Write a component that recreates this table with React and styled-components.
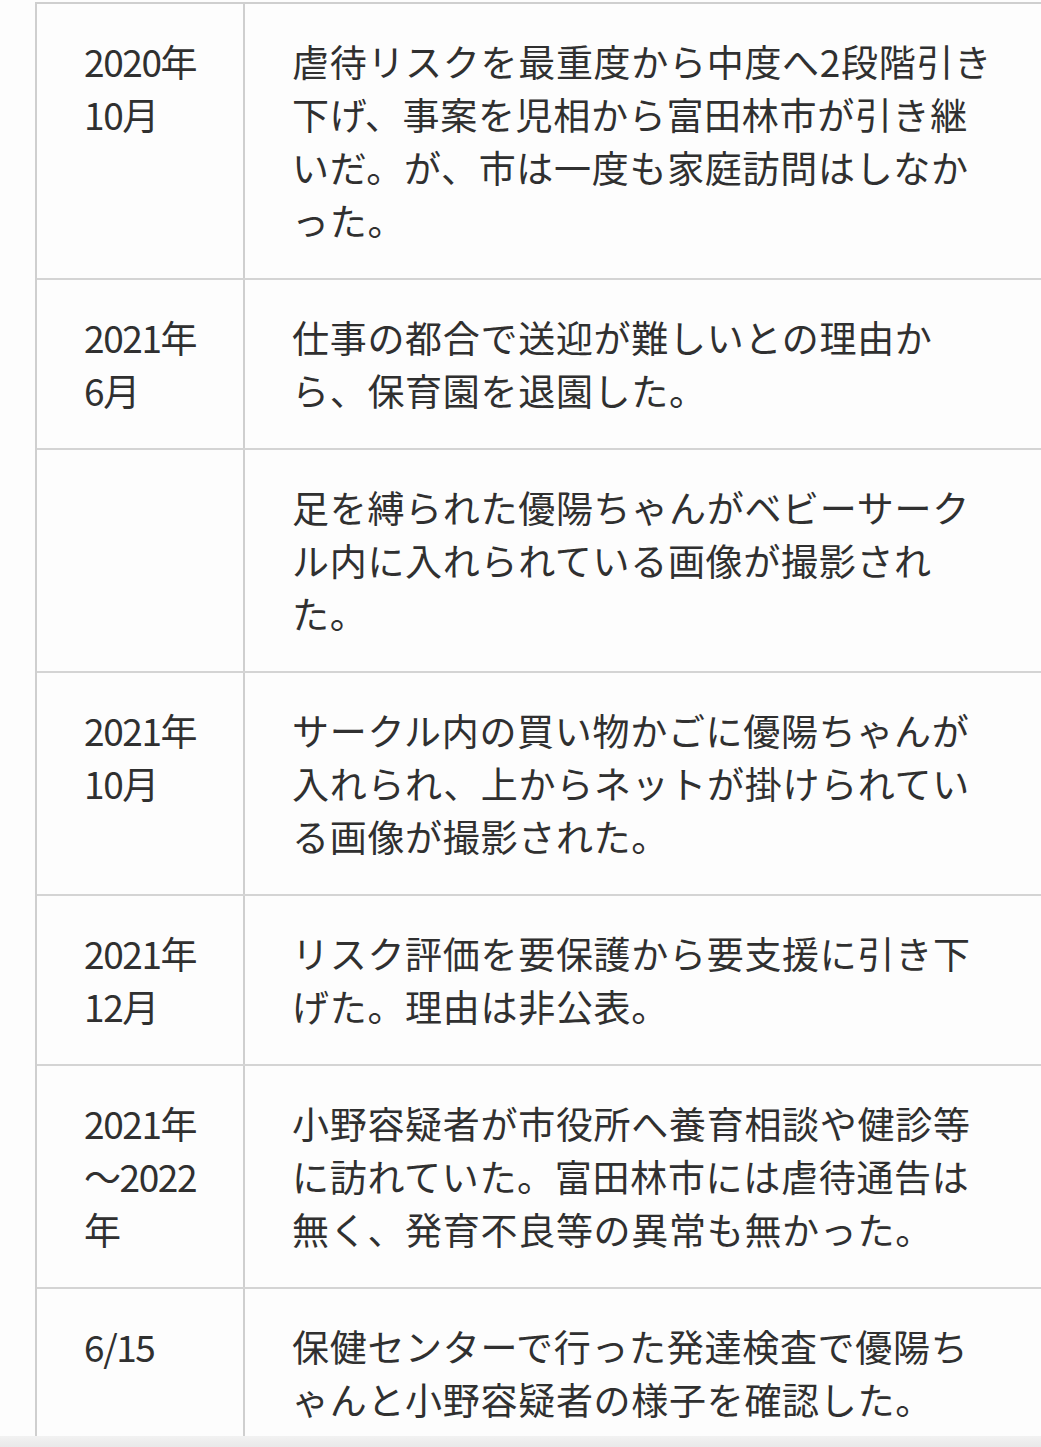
import React from 'react';
import styled, { createGlobalStyle } from 'styled-components';

const GlobalStyle = createGlobalStyle`
  html, body {
    margin: 0;
    padding: 0;
    background: #fdfdfd;
    overflow: hidden;
  }
  * { box-sizing: border-box; }
`;

const Page = styled.div`
  width: 1041px;
  height: 1447px;
  display: flex;
  flex-direction: column;
  overflow: hidden;
  font-family: "Noto Sans CJK JP", "Noto Sans", sans-serif;
  color: #303030;
`;

const Scroller = styled.div`
  flex: 1;
  overflow: hidden;
  padding: 2px 0 0 35px;
`;

const Table = styled.div`
  width: 1060px;
  border-left: 2px solid #cfcfcf;
  border-top: 2px solid #cfcfcf;
`;

const Row = styled.div`
  display: grid;
  grid-template-columns: 208px 1fr;
  border-bottom: 2px solid #d4d4d4;
`;

const Cell = styled.div`
  font-size: 37px;
  line-height: 53px;
  letter-spacing: 0.7px;
  padding: 31px 0;
`;

const DateCell = styled(Cell)`
  border-right: 2px solid #cfcfcf;
  padding-left: 47px;
  padding-right: 34px;
  letter-spacing: -1.4px;
`;

const TextCell = styled(Cell)`
  padding-left: 47px;
  width: 806px;
  padding-right: 53px;
`;

const BottomBar = styled.div`
  height: 11px;
  flex: none;
  background: linear-gradient(#f2f2f2, #e9e9e9);
`;

const rows = [
  ['2020年10月', '虐待リスクを最重度から中度へ2段階引き下げ、事案を児相から富田林市が引き継いだ。が、市は一度も家庭訪問はしなかった。'],
  ['2021年6月', '仕事の都合で送迎が難しいとの理由から、保育園を退園した。'],
  ['', '足を縛られた優陽ちゃんがベビーサークル内に入れられている画像が撮影された。'],
  ['2021年10月', 'サークル内の買い物かごに優陽ちゃんが入れられ、上からネットが掛けられている画像が撮影された。'],
  ['2021年12月', 'リスク評価を要保護から要支援に引き下げた。理由は非公表。'],
  ['2021年～2022年', '小野容疑者が市役所へ養育相談や健診等に訪れていた。富田林市には虐待通告は無く、発育不良等の異常も無かった。'],
  ['6/15', '保健センターで行った発達検査で優陽ちゃんと小野容疑者の様子を確認した。'],
];

export default function App() {
  return (
    <>
      <GlobalStyle />
      <Page>
        <Scroller>
          <Table>
            {rows.map(([date, text], i) => (
              <Row key={i}>
                <DateCell>{date}</DateCell>
                <TextCell>{text}</TextCell>
              </Row>
            ))}
          </Table>
        </Scroller>
        <BottomBar />
      </Page>
    </>
  );
}
